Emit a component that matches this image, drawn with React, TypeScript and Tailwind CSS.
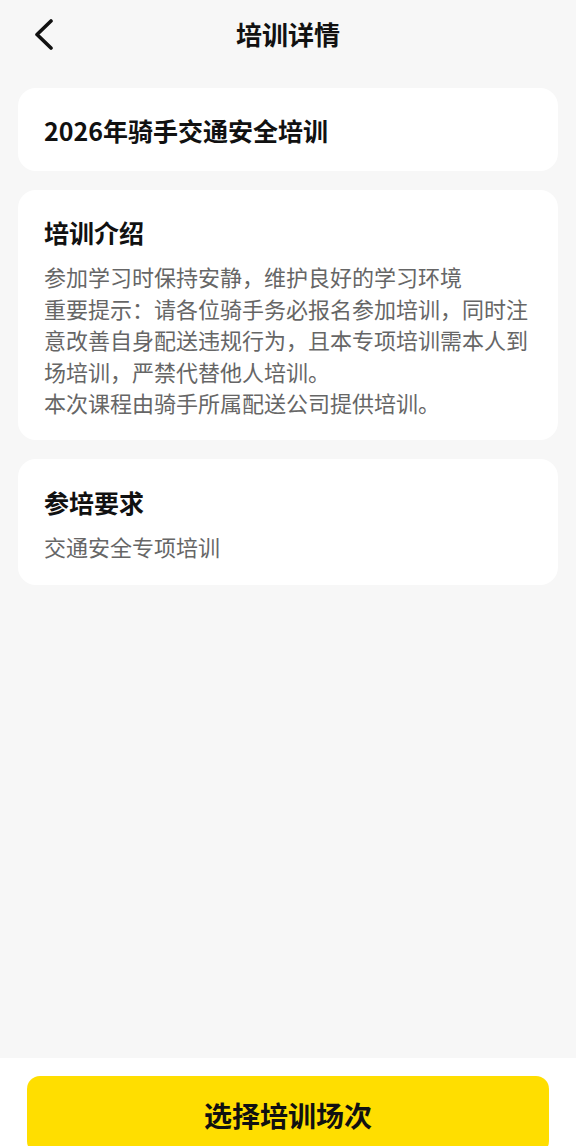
import React from "react";

const font = { fontFamily: '"Noto Sans CJK SC", "Noto Sans", sans-serif' };

export default function App() {
  return (
    <div
      className="flex h-screen w-full flex-col overflow-hidden bg-[#f7f7f7] text-[#111]"
      style={font}
    >
      <div className="flex-1">
        {/* Header */}
        <div className="relative flex h-[68px] items-center justify-center">
          <button className="absolute left-[30px] top-[17px] flex h-[34px] w-[26px] items-center justify-center">
            <svg width="22" height="32" viewBox="0 0 22 32" fill="none">
              <path
                d="M19 3 L5 16.5 L19 30"
                stroke="#111"
                strokeWidth="3.6"
                strokeLinecap="round"
                strokeLinejoin="round"
              />
            </svg>
          </button>
          <h1 className="text-[26px] font-bold leading-[32px]">培训详情</h1>
        </div>

        <div className="mt-[20px] flex flex-col gap-[19px] px-[18px]">
          {/* Card 1 */}
          <div className="flex h-[83px] items-center rounded-[18px] bg-white px-[26px]">
            <span className="text-[25px] font-bold leading-[32px]">
              2026年骑手交通安全培训
            </span>
          </div>

          {/* Card 2 */}
          <div className="rounded-[18px] bg-white px-[26px] pb-[21px] pt-[26px]">
            <h2 className="text-[25px] font-bold leading-[32px]">培训介绍</h2>
            <div className="mt-[13px] text-[22px] leading-[31.5px] text-[#666]">
              <p>参加学习时保持安静，维护良好的学习环境</p>
              <p>
                重要提示：请各位骑手务必报名参加培训，同时注意改善自身配送违规行为，且本专项培训需本人到场培训，严禁代替他人培训。
              </p>
              <p>本次课程由骑手所属配送公司提供培训。</p>
            </div>
          </div>

          {/* Card 3 */}
          <div className="rounded-[18px] bg-white px-[26px] pb-[23px] pt-[27px]">
            <h2 className="text-[25px] font-bold leading-[32px]">参培要求</h2>
            <div className="mt-[13px] text-[22px] leading-[31.5px] text-[#666]">
              交通安全专项培训
            </div>
          </div>
        </div>
      </div>

      {/* Bottom bar */}
      <div className="h-[88px] shrink-0 overflow-hidden bg-white px-[27px] pt-[18px]">
        <button className="flex h-[78px] w-full items-center justify-center rounded-[13px] bg-[#ffde00]">
          <span className="text-[28px] font-bold leading-[34px] text-[#111]">
            选择培训场次
          </span>
        </button>
      </div>
    </div>
  );
}
